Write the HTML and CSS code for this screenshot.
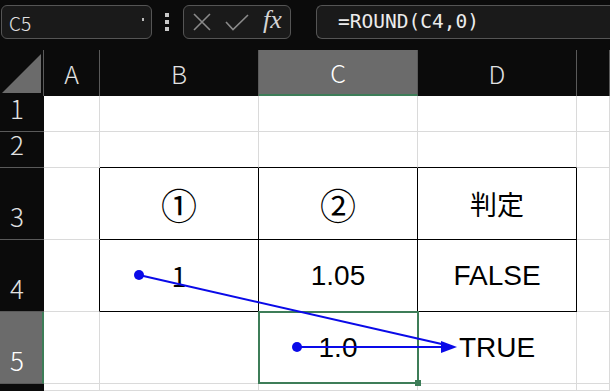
FILE: index.html
```html
<!DOCTYPE html>
<html lang="ja">
<head>
  <meta charset="UTF-8" />
  <title>ROUND</title>
  <link rel="stylesheet" href="styles.css">
</head>
<body>
  <!-- 数式バー -->
  <div class="topbar">
    <div class="namebox"><span>C5</span><span class="nb-dot"></span></div>
    <div class="vdots"><i></i><i></i><i></i></div>
    <div class="fxbox">
      <svg width="18" height="18" viewBox="0 0 18 18"><path d="M1 1 L17 17 M17 1 L1 17" stroke="#8a8a8a" stroke-width="1.6" fill="none"/></svg>
      <svg width="24" height="17" viewBox="0 0 24 17"><path d="M1 8 L8 15.5 L23 1" stroke="#8a8a8a" stroke-width="1.6" fill="none"/></svg>
      <span class="fx">fx</span>
    </div>
    <div class="formula">=ROUND(C4,0)</div>
  </div>

  <!-- シート -->
  <div class="sheet">
    <div class="corner"><svg width="44" height="46" viewBox="0 0 44 46"><polygon points="2,43 41,4 41,43" fill="#6b6b6b"/></svg></div>
    <div class="colhead">A</div>
    <div class="colhead">B</div>
    <div class="colhead sel">C</div>
    <div class="colhead">D</div>
    <div class="colhead"></div>

    <div class="rowhead">1</div>
    <div class="cell"></div><div class="cell"></div><div class="cell"></div><div class="cell"></div><div class="cell"></div>

    <div class="rowhead">2</div>
    <div class="cell"></div><div class="cell above"></div><div class="cell above"></div><div class="cell above"></div><div class="cell"></div>

    <div class="rowhead">3</div>
    <div class="cell left"></div>
    <div class="cell tb circ">①</div>
    <div class="cell tb circ">②</div>
    <div class="cell tb jp">判定</div>
    <div class="cell"></div>

    <div class="rowhead">4</div>
    <div class="cell left"></div>
    <div class="cell tb jp">1</div>
    <div class="cell tb">1.05</div>
    <div class="cell tb">FALSE</div>
    <div class="cell"></div>

    <div class="rowhead sel">5</div>
    <div class="cell"></div>
    <div class="cell"></div>
    <div class="cell selected">1.0</div>
    <div class="cell">TRUE</div>
    <div class="cell"></div>

    <div class="rowhead"></div>
    <div class="cell"></div><div class="cell"></div><div class="cell"></div><div class="cell"></div><div class="cell"></div>
  </div>

  <!-- 参照元トレース矢印 -->
  <svg class="arrows" width="610" height="391" viewBox="0 0 610 391">
    <line x1="139" y1="275" x2="446" y2="345" stroke="#0a0ae8" stroke-width="2"/>
    <line x1="297" y1="347" x2="444" y2="347" stroke="#0a0ae8" stroke-width="2"/>
    <circle cx="139" cy="275" r="5" fill="#0a0ae8"/>
    <circle cx="297" cy="347" r="5" fill="#0a0ae8"/>
    <polygon points="457,347 441,341 441,353" fill="#0a0ae8"/>
  </svg>
</body>
</html>
```

FILE: styles.css
```css
body {
  margin: 0;
  background-color: #0b0b0b;
  width: 610px;
  height: 391px;
  overflow: hidden;
  position: relative;
}

/* 数式バー */
.topbar {
  height: 50px;
  display: flex;
  align-items: flex-start;
  padding-top: 5px;
  box-sizing: border-box;
  font-family: "Noto Sans CJK JP", "Noto Sans", sans-serif;
}
.namebox {
  margin-left: 1px;
  width: 151px;
  height: 34px;
  box-sizing: border-box;
  border: 1px solid #555;
  border-radius: 6px;
  background-color: #1a1a1a;
  color: #e4e4e4;
  font-size: 19px;
  font-weight: 300;
  display: flex;
  align-items: center;
  justify-content: space-between;
  padding: 0 7px 0 7px;
}
.nb-dot {
  width: 2px;
  height: 3px;
  background-color: #bbb;
  margin-bottom: 6px;
}
.vdots {
  margin-left: 13px;
  width: 5px;
  height: 34px;
  display: flex;
  flex-direction: column;
  justify-content: center;
  gap: 3px;
}
.vdots i {
  display: block;
  width: 4px;
  height: 4px;
  background-color: #c8c8c8;
}
.fxbox {
  margin-left: 13px;
  width: 108px;
  height: 34px;
  box-sizing: border-box;
  border: 1px solid #555;
  border-radius: 6px;
  background-color: #1a1a1a;
  display: flex;
  align-items: center;
  padding-left: 9px;
  gap: 14px;
}
.fx {
  font-family: "Liberation Serif", serif;
  font-style: italic;
  font-size: 26px;
  color: #d4d4d4;
  margin-left: 0;
  margin-top: -4px;
}
.formula {
  margin-left: 25px;
  flex: 1;
  height: 34px;
  box-sizing: border-box;
  border: 1px solid #555;
  border-right: none;
  border-radius: 6px 0 0 6px;
  background-color: #1a1a1a;
  color: #ececec;
  font-family: "DejaVu Sans Mono", monospace;
  font-size: 19.5px;
  line-height: 32px;
  padding-left: 21px;
}

/* シート */
.sheet {
  display: grid;
  grid-template-columns: 44px 56px 159px 159px 159px 33px;
  grid-template-rows: 46px 36px 36px 72px 72px 72px 7px;
  background-color: #fff;
}
.corner {
  background-color: #0b0b0b;
  border-right: 1px solid #5a5a5a;
}
.corner svg {
  display: block;
}
.colhead {
  background-color: #0b0b0b;
  border-right: 1px solid #5a5a5a;
  box-sizing: border-box;
  color: #e2e2e2;
  font-family: "Noto Sans CJK JP", "Noto Sans", sans-serif;
  font-weight: 300;
  font-size: 25px;
  display: flex;
  align-items: center;
  justify-content: center;
}
.colhead.sel {
  background-color: #6b6b6b;
  border-bottom: 2px solid #3d7d58;
  color: #fff;
}
.rowhead {
  background-color: #0b0b0b;
  border-bottom: 1px solid #5a5a5a;
  box-sizing: border-box;
  color: #e2e2e2;
  font-family: "Noto Sans CJK JP", "Noto Sans", sans-serif;
  font-weight: 300;
  font-size: 26px;
  line-height: 26px;
  display: flex;
  align-items: flex-end;
  padding: 0 0 10px 10px;
}
.rowhead.sel {
  background-color: #6b6b6b;
  border-right: 2px solid #3d7d58;
  color: #fff;
}
.cell {
  border-right: 1px solid #dadada;
  border-bottom: 1px solid #dadada;
  box-sizing: border-box;
  display: flex;
  align-items: center;
  justify-content: center;
  color: #000;
  font-family: "Liberation Sans", Arial, sans-serif;
  font-size: 28px;
}
.cell.jp {
  font-family: "Noto Sans CJK JP", sans-serif;
  font-size: 27px;
}
.cell.circ {
  font-family: "Noto Sans CJK JP", sans-serif;
  font-size: 36px;
}
.cell.tb,
.cell.above {
  border-bottom-color: #000;
}
.cell.tb,
.cell.left {
  border-right-color: #000;
}
.cell.selected {
  position: relative;
}
.cell.selected::after {
  content: "";
  position: absolute;
  top: -1px;
  left: -1px;
  right: -2px;
  bottom: -1px;
  border: 2px solid #3d7d58;
}
.cell.selected::before {
  content: "";
  position: absolute;
  right: -4px;
  bottom: -3px;
  width: 6px;
  height: 6px;
  background-color: #3d7d58;
  z-index: 1;
}

/* 矢印 */
.arrows {
  position: absolute;
  top: 0;
  left: 0;
}
```
